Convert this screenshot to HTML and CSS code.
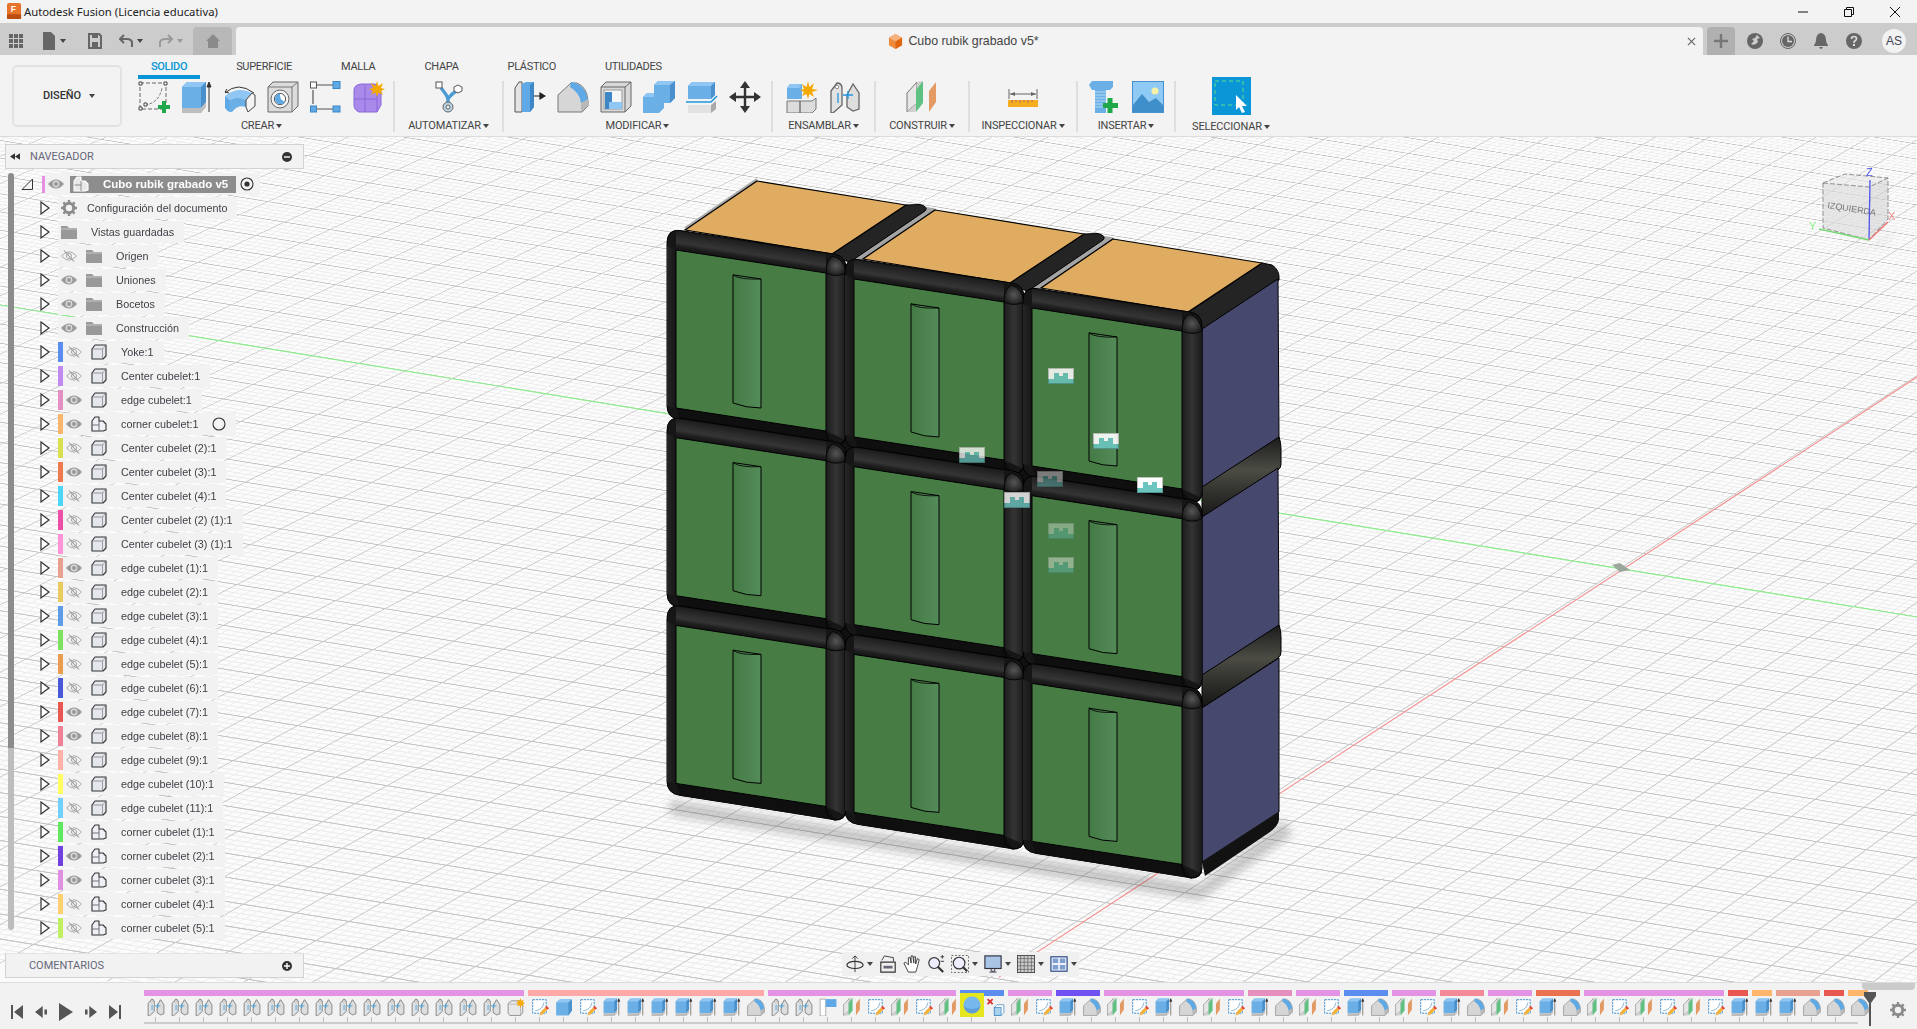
FILE: index.html
```html
<!DOCTYPE html>
<html lang="es">
<head>
<meta charset="utf-8">
<title>Autodesk Fusion</title>
<link rel="stylesheet" href="styles.css">
</head>
<body>
<svg class="defs" aria-hidden="true">
<defs>
<symbol id="eye-on" viewBox="0 0 16 12"><path d="M0 6Q8-3 16 6Q8 15 0 6Z" fill="#999"/><circle cx="8" cy="6" r="3.4" fill="#d8d8d8"/><circle cx="8" cy="6" r="2" fill="#999"/></symbol>
<symbol id="eye-off" viewBox="0 0 16 12"><path d="M.6 6Q8-2.5 15.4 6Q8 14.5.6 6Z" fill="none" stroke="#aaa"/><circle cx="8" cy="6" r="2.6" fill="none" stroke="#aaa"/><path d="M3 .5L13 11.5" stroke="#999" stroke-width="1.1"/></symbol>
<symbol id="folder" viewBox="0 0 16 14"><path d="M0 1H6L8 3H16V14H0Z" fill="#999"/><path d="M0 4H16" stroke="#ddd" stroke-width=".7"/></symbol>
<symbol id="gear" viewBox="0 0 16 16"><circle cx="8" cy="8" r="4.7" fill="none" stroke="#8c8c8c" stroke-width="3"/><path d="M8 0V16M0 8H16M2.3 2.3L13.7 13.7M13.7 2.3L2.3 13.7" stroke="#8c8c8c" stroke-width="2.4" stroke-dasharray="3 10 3"/></symbol>
<symbol id="cube" viewBox="0 0 16 16"><path d="M1 5L4 1H15V12L12 15H1Z" fill="#e4e7ee" stroke="#333" stroke-width="1.1" stroke-linejoin="round"/><path d="M1.5 5H11.5V14.5M11.5 5L15 1.2" fill="none" stroke="#777" stroke-width=".7"/></symbol>
<symbol id="comp" viewBox="0 0 16 16"><path d="M1 5L4 1H8V5H12L15 8V14L12 15H1Z" fill="#eef0f5" stroke="#333" stroke-width="1.1" stroke-linejoin="round"/><path d="M1.5 9H8V15M8 5V9" fill="none" stroke="#555" stroke-width=".8"/></symbol>
<symbol id="comp-w" viewBox="0 0 16 16"><path d="M1 5L4 1H8V5H12L15 8V14L12 15H1Z" fill="#e8e8e8" stroke="#fff" stroke-width="1.1" stroke-linejoin="round"/><path d="M1.5 9H8V15M8 5V9" fill="none" stroke="#777" stroke-width=".8"/></symbol>
<symbol id="arrow" viewBox="0 0 10 14"><path d="M1 1L9 7L1 13Z" fill="#fff" stroke="#333" stroke-width="1.2"/></symbol>
<symbol id="radio" viewBox="0 0 14 14"><circle cx="7" cy="7" r="6" fill="#f4f4f4" stroke="#333" stroke-width="1.1"/></symbol>
<symbol id="radio-on" viewBox="0 0 14 14"><circle cx="7" cy="7" r="6" fill="#f4f4f4" stroke="#333" stroke-width="1.1"/><circle cx="7" cy="7" r="2.6" fill="#333"/></symbol>

<symbol id="s-sketch" viewBox="0 0 32 32"><rect x="2" y="2" width="26" height="26" fill="none" stroke="#666" stroke-dasharray="4 2"/><path d="M7 24Q21 22 24 7" fill="none" stroke="#777" stroke-dasharray="3 1.5"/><path d="M1 1h3v3H1zM26 1h3v3h-3zM1 26h3v3H1zM6 22h3v3H6z" fill="#fff" stroke="#444"/><path d="M26 20V32M20 26H32" stroke="#1fa84a" stroke-width="4"/></symbol>
<symbol id="s-ext" viewBox="0 0 32 32"><path d="M1 6L6 1H25V21L20 27H1Z" fill="#6ab0e6"/><path d="M1 6L6 1H25L20 6Z" fill="#8fc6f3"/><path d="M20 6L25 1V21L20 27Z" fill="#4a90cc"/><path d="M1 27H20L25 21V26L20 32H1Z" fill="#bdbdbd"/><path d="M28 31V2M26 6L28 1L30 6Z" stroke="#333" fill="#333"/></symbol>
<symbol id="s-rev" viewBox="0 0 32 32"><path d="M1 12Q14 0 30 12" fill="none" stroke="#333"/><path d="M1 11L3 8M1 11L5 12" stroke="#333"/><path d="M1 15Q14 5 28 12L22 19Q14 14 6 19Z" fill="#8fc6f3"/><path d="M1 15L6 19V31Q3 30 1 27Z" fill="#5ea9e6"/><path d="M6 19Q14 14 22 19V26Q14 23 8 31H6Z" fill="#6ab0e6"/><path d="M22 19L28 12L31 14V25L24 31L22 26Z" fill="#f4f4f4" stroke="#444"/></symbol>
<symbol id="s-hole" viewBox="0 0 32 32"><path d="M1 6L6 1H31V25L25 31H1Z" fill="#dcdcdc" stroke="#666"/><path d="M1 6H25V31M25 6L31 1" fill="none" stroke="#777"/><circle cx="13" cy="18" r="9" fill="#f2f2f2" stroke="#666"/><circle cx="13" cy="18" r="5.6" fill="#fff" stroke="#555"/><path d="M8 18A5.6 5.6 0 0 1 13 12.5A8 8 0 0 0 18 21A5.600 5.600 0 0 1 8 18Z" fill="#5ea9e6"/></symbol>
<symbol id="s-rigid" viewBox="0 0 32 32"><path d="M7 4H23M3 9V23M7 28H23" stroke="#555" stroke-width="1.2"/><rect x="0.500" y="1" width="6" height="6" fill="#fff" stroke="#555"/><rect x="23" y="0.500" width="7" height="7" fill="#5ea9e6" stroke="#3f87c4"/><rect x="0.500" y="25" width="6" height="6" fill="#5ea9e6" stroke="#3f87c4"/><rect x="23" y="25" width="7" height="6" fill="#5ea9e6" stroke="#3f87c4"/></symbol>
<symbol id="s-form" viewBox="0 0 32 32"><path d="M1 9Q1 4 8 3H22L28 10V24L24 31H6Q1 29 1 24Z" fill="#a98aea" stroke="#8a66d8"/><path d="M1 18H24M12 4V31M24 8V31" stroke="#8a66d8" fill="none"/><path d="M24 0L25.500 5L30 2L28 7L32 8L28 10L30 14L25.500 11.500L24 16L22.500 11.500L18 14L20 10L16 8L20 7L18 2L22.500 5Z" fill="#f5a800"/></symbol>
<symbol id="s-auto" viewBox="0 0 32 32"><path d="M8 7Q14 14 15 18M25 9Q18 13 15 18V24" fill="none" stroke="#4d9bd4" stroke-width="3.4"/><rect x="3" y="1" width="6" height="6" fill="#fff" stroke="#555"/><path d="M25 4L29 6V10L25 12L21 10V6Z" fill="#fff" stroke="#555"/><circle cx="15" cy="26" r="5" fill="#b9d2e6" stroke="#666"/><circle cx="15" cy="26" r="2" fill="#eee" stroke="#666"/></symbol>
<symbol id="s-press" viewBox="0 0 32 32"><path d="M1 7L5 1H8V31H1Z" fill="#e4e4e4" stroke="#555"/><path d="M8 3L12 1H20V26L16 31H8Z" fill="#5ea9e6"/><path d="M16 4L20 1V26L16 31Z" fill="#3f87c4"/><path d="M20 15H29M26 12L31 15L26 18Z" stroke="#222" fill="#222" stroke-width="1.200"/></symbol>
<symbol id="s-fillet" viewBox="0 0 32 32"><path d="M1 14L14 2H20Q30 6 31 20V25L25 31H1Z" fill="#d6d6d6" stroke="#777"/><path d="M14 3Q20 4 26 14L22 12Q20 8 14 5Z" fill="#5ea9e6"/><path d="M14 1Q28 3 31 19L24 22Q23 12 13 6Z" fill="#5ea9e6"/><path d="M24 31V22L31 18V25Z" fill="#b8b8b8"/></symbol>
<symbol id="s-shell" viewBox="0 0 32 32"><path d="M1 6L6 1H31V25L25 31H1Z" fill="#d8d8d8" stroke="#666"/><path d="M1 6H25V31M25 6L31 1" fill="none" stroke="#666"/><rect x="4" y="9" width="18" height="19" fill="#f6f6f6" stroke="#999"/><path d="M5 11H12V21H22V28H5Z" fill="#8fc6f3"/><path d="M5 11H12V21H9V28H5Z" fill="#3f87c4"/></symbol>
<symbol id="s-comb" viewBox="0 0 32 32"><path d="M11 12V4L15 0H32V17L27 22H21V27L16 32H0V16L4 12Z" fill="#6ab0e6"/><path d="M11 4L15 0H32L27 4Z" fill="#8fc6f3"/><path d="M27 4L32 0V17L27 22Z" fill="#4a90cc"/><path d="M0 16L4 12H11V16Z" fill="#8fc6f3"/></symbol>
<symbol id="s-off" viewBox="0 0 32 32"><path d="M2 5L6 1H29V14L25 18H2Z" fill="#6ab0e6"/><path d="M2 5L6 1H29L25 5Z" fill="#8fc6f3"/><path d="M25 5L29 1V14L25 18Z" fill="#4a90cc"/><path d="M0 21H25L31 15" stroke="#2196e0" stroke-width="1.600" fill="none"/><path d="M2 24H25L30 20V28L25 32H2Z" fill="#e2e2e2"/><path d="M25 24L30 20V28L25 32Z" fill="#aaa"/></symbol>
<symbol id="s-move" viewBox="0 0 32 32"><path d="M16 2V30M2 16H30" stroke="#333" stroke-width="2.400"/><path d="M16 0L21 7H11ZM16 32L21 25H11ZM0 16L7 11V21ZM32 16L25 11V21Z" fill="#333"/></symbol>
<symbol id="s-new" viewBox="0 0 32 32"><path d="M1 20H14V32H1ZM14 20H26L30 17V28L26 32H14Z" fill="#dcdcdc" stroke="#777"/><path d="M1 7L4 3H16V18H1Z" fill="#6ab0e6"/><path d="M1 7L4 3H16L13 7Z" fill="#8fc6f3"/><path d="M22 0L23.500 6L28 2L26 8L32 9L26 11L28 16L23.500 13L22 18L20.500 13L16 15L18 11L14 9L18 8L16 3L20.500 6Z" fill="#f5a800"/></symbol>
<symbol id="s-joint" viewBox="0 0 32 32"><path d="M2 10L8 2Q12 2 13 6V24L4 32H2Z" fill="#e2e2e2" stroke="#666" stroke-width="1.300"/><path d="M19 12L24 3L30 12V28L24 30L18 26V14Z" fill="#dedede" stroke="#666" stroke-width="1.300"/><path d="M9 12V22M19 10V18M14 14H24" stroke="#2196e0" stroke-width="1.300"/><circle cx="8" cy="6" r="1.800" fill="#fff" stroke="#666" stroke-width=".7"/></symbol>
<symbol id="s-plane" viewBox="0 0 32 32"><path d="M1 12L11 1V22L1 31Z" fill="#e6e6e6" stroke="#777"/><path d="M11 1L16 0V22L9 31H1L11 22Z" fill="#cfcfcf"/><path d="M10 31L17 22V0L10 9Z" fill="#5ec182"/><path d="M23 10L30 1V21L23 31Z" fill="#e39a63"/></symbol>
<symbol id="s-meas" viewBox="0 0 32 32"><path d="M2 8V18M30 8V18" stroke="#666"/><path d="M3 13H29" stroke="#666"/><path d="M3 13L8 11V15ZM29 13L24 11V15Z" fill="#666"/><rect x="1" y="19" width="30" height="7" fill="#f5ad1d"/><path d="M5 19v3M9 19v2M13 19v3M17 19v2M21 19v3M25 19v2" stroke="#a66"/></symbol>
<symbol id="s-bolt" viewBox="0 0 32 32"><path d="M0 4L3 0H24V6L21 9H17V32H6V9H3Z" fill="#6ab0e6"/><path d="M6 11H17M6 14H17M6 17H17M6 20H17M6 23H17M6 26H17" stroke="#b6d9f3"/><path d="M21 17V32M14 24.500H29" stroke="#1fa84a" stroke-width="5"/></symbol>
<symbol id="s-img" viewBox="0 0 32 32"><rect x="0.500" y="0.500" width="31" height="31" fill="#8fcaf5" stroke="#4a90cc"/><circle cx="23" cy="10" r="3.500" fill="#f6f0a8"/><path d="M1 24L10 13L17 21L24 17L31 24V31H1Z" fill="#3f8fca"/></symbol>
<symbol id="s-sel" viewBox="0 0 39 38"><rect width="39" height="38" fill="#0b96d8"/><rect x="3" y="4" width="28" height="24" fill="none" stroke="#5fe08a" stroke-dasharray="4 3"/><path d="M24 18V33L27 30L30 36L33 35L30 29H35Z" fill="#fff"/></symbol>

<symbol id="t-sketch" viewBox="0 0 32 32"><rect x="3" y="3" width="24" height="24" fill="#fff" stroke="#3f8fd0" stroke-width="1.700" stroke-dasharray="4 1.500"/><path d="M7 23Q21 21 23 8" fill="none" stroke="#6a9cc6" stroke-width="1.300"/><path d="M15 31L17 25L25 17L29 21L21 29Z" fill="#f2b03c"/><path d="M25 17L28 14L32 18L29 21Z" fill="#ea4033"/></symbol>
<symbol id="t-box" viewBox="0 0 32 32"><path d="M2 8L9 2H30V22L24 31H2Z" fill="#6ab0e6"/><path d="M2 8L9 2H30L24 8Z" fill="#8fc6f3"/><path d="M24 8L30 2V22L24 31Z" fill="#4a90cc"/></symbol>
<symbol id="t-flag" viewBox="0 0 32 32"><path d="M2 2H12V32H2Z" fill="#fff" stroke="#777"/><rect x="12" y="2" width="19" height="14" fill="#5ea9e6"/></symbol>
<symbol id="t-sphere" viewBox="0 0 32 32"><circle cx="16" cy="16" r="15" fill="#76b7ee"/><path d="M1 16A15 7 0 0 0 31 16A15 15 0 0 1 1 16Z" fill="#5f9fd6"/></symbol>
<symbol id="t-rem" viewBox="0 0 32 32"><path d="M1 2L10 11M10 2L1 11" stroke="#d62d2d" stroke-width="3"/><path d="M13 17L18 12H30V26L25 31H13Z" fill="#fff" stroke="#3f87c4" stroke-width="1.300"/><rect x="13" y="17" width="12" height="14" fill="#a9d2f0" stroke="#3f87c4" stroke-width="1.300"/></symbol>
<symbol id="t-new" viewBox="0 0 32 32"><path d="M2 10L8 5H24L28 9V26L24 31H5L2 27Z" fill="#e8e8e8" stroke="#777" stroke-width="1.300"/><path d="M2 11H24V31" fill="none" stroke="#999"/><path d="M24 0L25.500 5L30 3L28 7L32 9L28 11L30 15L25.500 13L24 18L22.500 13L18 15L20 11L16 9L20 7L18 3L22.500 5Z" fill="#f5a800"/></symbol>

<linearGradient id="g-top" gradientUnits="userSpaceOnUse" x1="73" y1="-8" x2="70" y2="11"><stop offset="0" stop-color="#1c1c1c"/><stop offset=".35" stop-color="#2c2c2c"/><stop offset=".6" stop-color="#353535"/><stop offset=".8" stop-color="#1e1e1e"/><stop offset="1" stop-color="#141414"/></linearGradient>
<linearGradient id="g-right" gradientUnits="userSpaceOnUse" x1="150" y1="0" x2="170" y2="0"><stop offset="0" stop-color="#1c1c1c"/><stop offset=".5" stop-color="#343434"/><stop offset="1" stop-color="#1a1a1a"/></linearGradient>
<linearGradient id="g-left" gradientUnits="userSpaceOnUse" x1="-9" y1="0" x2="0" y2="0"><stop offset="0" stop-color="#262626"/><stop offset="1" stop-color="#161616"/></linearGradient>
<linearGradient id="g-slot"><stop offset="0" stop-color="#447a44"/><stop offset="1" stop-color="#548b5a"/></linearGradient>
<radialGradient id="g-ball"><stop offset="0" stop-color="#565656"/><stop offset="1" stop-color="#1f1f1f"/></radialGradient>
<linearGradient id="g-band" x1="0" y1="0" x2="0" y2="1"><stop offset="0" stop-color="#1b1b1b"/><stop offset=".4" stop-color="#4c4c45"/><stop offset=".7" stop-color="#2e2e2a"/><stop offset="1" stop-color="#141414"/></linearGradient>
<filter id="blur" x="-10%" y="-50%" width="120%" height="200%"><feGaussianBlur stdDeviation="4"/></filter>

<g id="cell">
<path d="M-9-7Q-9-21 4-19.500L158 4Q170 6 170 18V184Q170 196 158 194L4 170Q-9 168-9 156Z" fill="#161616" stroke="#000"/>
<path d="M0-19L150 4L150 23L0 0Z" fill="url(#g-top)"/>
<path d="M150 23H170V190L150 181Z" fill="url(#g-right)"/>
<path d="M-9-4L0 0V158L-9 156Z" fill="url(#g-left)"/>
<path d="M0 158L150 181L160 195L4 170Z" fill="#0f0f0f"/>
<path d="M150 23Q150 10 157 6Q168 9 170 23Q160 28 150 23Z" fill="url(#g-ball)" stroke="#000" stroke-width=".8"/>
<path d="M150 181Q150 193 159 195Q169 195 170 184" fill="none" stroke="#000" stroke-width=".8"/>
<path d="M0 0L150 23V181L0 158Z" fill="#477d45" stroke="#000"/>
<path d="M57 25Q57 24 58 25L85 29V158Q70 158 57 153Z" fill="url(#g-slot)" stroke="#000"/>
<path d="M57 25Q64 30 85 29" fill="none" stroke="#000" stroke-width=".8"/>
</g>
<g id="badge">
<rect width="26" height="16" fill="#fff"/>
<path d="M0 11H6V5H11V8H15V5H20V11H26V16H0Z" fill="#6cc6c0"/>
<rect x=".5" y=".5" width="25" height="15" fill="none" stroke="#000" stroke-opacity=".25"/>
</g>
</defs>
</svg>

<header class="titlebar">
  <svg class="app-logo" viewBox="0 0 16 18"><rect width="15" height="17" rx="2" fill="#e8742c"/><rect y="12" width="15" height="5" rx="1" fill="#bb4d10"/><text x="4" y="10" class="logo-f">F</text></svg>
  <span class="app-title">Autodesk Fusion (Licencia educativa)</span>
  <div class="winctl">
    <svg class="wbtn" viewBox="0 0 12 12"><path d="M1 6H11" stroke="#111"/></svg>
    <svg class="wbtn" viewBox="0 0 12 12"><path d="M1.500 3.500H8.500V10.500H1.500ZM3.500 3.500V1.500H10.500V8.500H8.500" fill="none" stroke="#111"/></svg>
    <svg class="wbtn" viewBox="0 0 12 12"><path d="M1 1L11 11M11 1L1 11" stroke="#111"/></svg>
  </div>
</header>

<nav class="tabbar">
  <div class="quick">
    <svg class="qi" viewBox="0 0 14 14"><path d="M0 0h4v4H0zM5 0h4v4H5zM10 0h4v4h-4zM0 5h4v4H0zM5 5h4v4H5zM10 5h4v4h-4zM0 10h4v4H0zM5 10h4v4H5zM10 10h4v4h-4z" fill="#666"/></svg>
    <svg class="qi file" viewBox="0 0 14 18"><path d="M1 0H9L13 4V18H1Z" fill="#666"/></svg><span class="caret dark"></span>
    <svg class="qi save" viewBox="0 0 14 16"><path d="M1 1H11L13 3V15H1Z" fill="none" stroke="#666" stroke-width="2"/><path d="M4 1H10V5H4ZM4 9H10V15H4Z" fill="#666"/></svg>
    <svg class="qi undo" viewBox="0 0 14 14"><path d="M13 13V8Q12 5 8 5H2M5 1L1 5L5 9" fill="none" stroke="#666" stroke-width="2"/></svg><span class="caret dark"></span>
    <svg class="qi redo" viewBox="0 0 14 14"><path d="M1 13V8Q2 5 6 5H12M9 1L13 5L9 9" fill="none" stroke="#9a9a9a" stroke-width="2"/></svg><span class="caret"></span>
  </div>
  <div class="home"><svg class="qi" viewBox="0 0 14 14"><path d="M0 7L7 0L14 7H12V14H2V7Z" fill="#8a8a8a"/></svg></div>
  <div class="doc-tab">
    <svg class="doc-cube" viewBox="0 0 16 16"><path d="M8 0L15 4V12L8 16L1 12V4Z" fill="#f08a3c"/><path d="M8 0L15 4L8 8L1 4Z" fill="#f7b27c"/><path d="M8 8L15 4V12L8 16Z" fill="#e0660f"/></svg>
    <span class="doc-name">Cubo rubik grabado v5*</span>
    <svg class="doc-close" viewBox="0 0 10 10"><path d="M1 1L9 9M9 1L1 9" stroke="#666" stroke-width="1.300"/></svg>
  </div>
  <div class="plus-tab"><svg class="qi" viewBox="0 0 14 14"><path d="M7 0V14M0 7H14" stroke="#777" stroke-width="2.400"/></svg></div>
  <div class="status">
    <svg class="st" viewBox="0 0 16 16"><circle cx="8" cy="8" r="8" fill="#666"/><path d="M10 2L13 5L10 6L11 9Q8 13 4 11L7 8L5 6L8 5Z" fill="#ccc"/></svg>
    <svg class="st" viewBox="0 0 16 16"><circle cx="8" cy="8" r="7.500" fill="none" stroke="#666"/><circle cx="8" cy="8" r="6" fill="#666"/><path d="M8 3.500V8.500H12" fill="none" stroke="#ddd" stroke-width="1.300"/></svg>
    <svg class="st" viewBox="0 0 16 16"><path d="M8 0Q13 1 13 7Q13 10 15 12V13H1V12Q3 10 3 7Q3 1 8 0Z" fill="#666"/><path d="M6 14H10Q9 16 8 16Q7 16 6 14Z" fill="#666"/></svg>
    <svg class="st" viewBox="0 0 16 16"><circle cx="8" cy="8" r="8" fill="#666"/><path d="M5.500 6Q5.500 3.500 8 3.500Q10.500 3.500 10.500 5.800Q10.500 7 8.800 8Q8 8.500 8 10" fill="none" stroke="#ddd" stroke-width="1.700"/><rect x="7" y="11" width="2" height="2" fill="#ddd"/></svg>
    <div class="avatar">AS</div>
  </div>
</nav>

<section class="toolbar">
  <button class="design">DISEÑO<span class="caret dark"></span></button>
  <div class="ribbon">
    <div class="tabs">
      <span class="tab active">SOLIDO</span><span class="tab">SUPERFICIE</span><span class="tab">MALLA</span><span class="tab">CHAPA</span><span class="tab">PLÁSTICO</span><span class="tab">UTILIDADES</span>
    </div>
    <div class="groups">
      <div class="group g-create">
        <div class="icons"><svg class="ti"><use href="#s-sketch"/></svg><svg class="ti"><use href="#s-ext"/></svg><svg class="ti"><use href="#s-rev"/></svg><svg class="ti"><use href="#s-hole"/></svg><svg class="ti"><use href="#s-rigid"/></svg><svg class="ti"><use href="#s-form"/></svg></div>
        <span class="glabel">CREAR<span class="caret dark"></span></span>
      </div>
      <div class="group g-auto">
        <div class="icons"><svg class="ti"><use href="#s-auto"/></svg></div>
        <span class="glabel">AUTOMATIZAR<span class="caret dark"></span></span>
      </div>
      <div class="group g-mod">
        <div class="icons"><svg class="ti"><use href="#s-press"/></svg><svg class="ti"><use href="#s-fillet"/></svg><svg class="ti"><use href="#s-shell"/></svg><svg class="ti"><use href="#s-comb"/></svg><svg class="ti"><use href="#s-off"/></svg><svg class="ti"><use href="#s-move"/></svg></div>
        <span class="glabel">MODIFICAR<span class="caret dark"></span></span>
      </div>
      <div class="group g-asm">
        <div class="icons"><svg class="ti"><use href="#s-new"/></svg><svg class="ti"><use href="#s-joint"/></svg></div>
        <span class="glabel">ENSAMBLAR<span class="caret dark"></span></span>
      </div>
      <div class="group g-con">
        <div class="icons"><svg class="ti"><use href="#s-plane"/></svg></div>
        <span class="glabel">CONSTRUIR<span class="caret dark"></span></span>
      </div>
      <div class="group g-ins">
        <div class="icons"><svg class="ti"><use href="#s-meas"/></svg></div>
        <span class="glabel">INSPECCIONAR<span class="caret dark"></span></span>
      </div>
      <div class="group g-ib">
        <div class="icons"><svg class="ti"><use href="#s-bolt"/></svg><svg class="ti"><use href="#s-img"/></svg></div>
        <span class="glabel">INSERTAR<span class="caret dark"></span></span>
      </div>
      <div class="group g-sel">
        <div class="icons"><svg class="sel-i"><use href="#s-sel"/></svg></div>
        <span class="glabel">SELECCIONAR<span class="caret dark"></span></span>
      </div>
    </div>
  </div>
</section>

<main class="viewport">
  <div class="plane"></div>
  <svg class="scene" viewBox="0 137 1917 845">
    <path d="M0 305L1917 617" stroke="#8df08d" stroke-width="1.200" fill="none"/>
    <path d="M1917 377L999 977" stroke="#f59090" stroke-width="1.200" fill="none"/>
    <path d="M1612 565L1620 563L1630 570L1620 572Z" fill="#9aa79a"/>
    <path d="M670 800L1200 885L1285 820L1292 835L1200 900L670 815Z" fill="#555" opacity=".3" filter="url(#blur)"/>
    <path d="M757 179L685 228" stroke="#aaa" stroke-width="2"/>
    <path d="M927 207L937 209L866 260L848 262Z" fill="#a4a4a4"/>
    <path d="M1105 236L1115 238L1044 289L1026 291Z" fill="#a4a4a4"/>
    <path d="M906 205L920 204.500Q929 207 925 211L850 262L828 256Z" fill="#242424" stroke="#000"/>
    <path d="M1084 234L1098 233.500Q1107 236 1103 240L1028 291L1006 285Z" fill="#242424" stroke="#000"/>
    <path d="M1262 263L1272 265Q1280 270 1279 280L1204 332L1186 314Z" fill="#242424" stroke="#000"/>
    <path d="M757 181L906 205L832 254L685 230Z" fill="#dfac62" stroke="#000" stroke-width="1.200"/>
    <path d="M935 210L1084 234L1010 283L863 259Z" fill="#dfac62" stroke="#000" stroke-width="1.200"/>
    <path d="M1113 239L1262 263L1188 312L1041 288Z" fill="#dfac62" stroke="#000" stroke-width="1.200"/>
    <path d="M680 240L1195 320V870L680 785Z" fill="#111"/>
    <path d="M1202 329L1278 279L1279 439L1202 489Z" fill="#47486e" stroke="#000"/>
    <path d="M1202 487L1279 437Q1281 442 1281 449V464Q1281 468 1278 470L1202 520Z" fill="url(#g-band)" stroke="#000"/>
    <path d="M1202 517L1278 468L1279 627L1202 677Z" fill="#47486e" stroke="#000"/>
    <path d="M1202 675L1279 625Q1281 630 1281 637V652Q1281 656 1278 658L1202 708Z" fill="url(#g-band)" stroke="#000"/>
    <path d="M1202 708L1279 658L1279 812L1202 862Z" fill="#47486e" stroke="#000"/>
    <path d="M1202 862L1279 812V820Q1278 826 1270 832L1205 876Z" fill="#121212"/>
    <use href="#cell" x="676" y="250"/><use href="#cell" x="854" y="279"/><use href="#cell" x="1032" y="308"/>
    <use href="#cell" x="676" y="437.700"/><use href="#cell" x="854" y="466.700"/><use href="#cell" x="1032" y="495.700"/>
    <use href="#cell" x="676" y="625.400"/><use href="#cell" x="854" y="654.400"/><use href="#cell" x="1032" y="683.400"/>
    <use href="#badge" x="1048" y="368" opacity=".85"/>
    <use href="#badge" x="1093" y="433" opacity=".9"/>
    <use href="#badge" x="1137" y="477"/>
    <use href="#badge" x="1037" y="471" opacity=".45"/>
    <use href="#badge" x="1004" y="492" opacity=".8"/>
    <use href="#badge" x="959" y="447" opacity=".75"/>
    <use href="#badge" x="1048" y="523" opacity=".35"/>
    <use href="#badge" x="1048" y="557" opacity=".4"/>
  </svg>

  <aside class="nav-panel">
    <div class="panel-head">
      <svg class="rew" viewBox="0 0 12 8"><path d="M6 0V8L0 4ZM12 0V8L6 4Z" fill="#333"/></svg>
      <span class="panel-title">NAVEGADOR</span>
      <svg class="pm" viewBox="0 0 10 10"><circle cx="5" cy="5" r="5" fill="#333"/><path d="M2 5H8" stroke="#fff" stroke-width="1.400"/></svg>
    </div>
    <div class="tree">
      <div class="scrollbar"></div>
      <div class="rows">
        <div class="row root">
          <svg class="tri" viewBox="0 0 12 12"><path d="M1 11.500L11.500 1V11.500Z" fill="#f4f4f4" stroke="#333"/></svg>
          <span class="rbar pink"></span>
          <div class="rbody rootb">
            <svg class="eye"><use href="#eye-on"/></svg>
            <div class="selected"><svg class="ci16"><use href="#comp-w"/></svg><span class="sel-name">Cubo rubik grabado v5</span></div>
            <svg class="radio"><use href="#radio-on"/></svg>
          </div>
        </div>
        <div class="row"><svg class="arr"><use href="#arrow"/></svg><div class="rbody"><svg class="ci16"><use href="#gear"/></svg><span class="txt t-gear">Configuración del documento</span></div></div>
        <div class="row"><svg class="arr"><use href="#arrow"/></svg><div class="rbody"><svg class="ci16 fd"><use href="#folder"/></svg><span class="txt">Vistas guardadas</span></div></div>
        <div class="row"><svg class="arr"><use href="#arrow"/></svg><div class="rbody"><svg class="eye"><use href="#eye-off"/></svg><svg class="ci16 fd"><use href="#folder"/></svg><span class="txt">Origen</span></div></div>
        <div class="row"><svg class="arr"><use href="#arrow"/></svg><div class="rbody"><svg class="eye"><use href="#eye-on"/></svg><svg class="ci16 fd"><use href="#folder"/></svg><span class="txt">Uniones</span></div></div>
        <div class="row"><svg class="arr"><use href="#arrow"/></svg><div class="rbody"><svg class="eye"><use href="#eye-on"/></svg><svg class="ci16 fd"><use href="#folder"/></svg><span class="txt">Bocetos</span></div></div>
        <div class="row"><svg class="arr"><use href="#arrow"/></svg><div class="rbody"><svg class="eye"><use href="#eye-on"/></svg><svg class="ci16 fd"><use href="#folder"/></svg><span class="txt">Construcción</span></div></div>
        <div class="row"><svg class="arr"><use href="#arrow"/></svg><span class="cbar c-yoke"></span><div class="rbody item"><svg class="eye"><use href="#eye-off"/></svg><svg class="ci16"><use href="#cube"/></svg><span class="txt">Yoke:1</span></div></div>
        <div class="row"><svg class="arr"><use href="#arrow"/></svg><span class="cbar c-a"></span><div class="rbody item"><svg class="eye"><use href="#eye-off"/></svg><svg class="ci16"><use href="#cube"/></svg><span class="txt">Center cubelet:1</span></div></div>
        <div class="row"><svg class="arr"><use href="#arrow"/></svg><span class="cbar c-b"></span><div class="rbody item"><svg class="eye"><use href="#eye-on"/></svg><svg class="ci16"><use href="#cube"/></svg><span class="txt">edge cubelet:1</span></div></div>
        <div class="row"><svg class="arr"><use href="#arrow"/></svg><span class="cbar c-c"></span><div class="rbody item"><svg class="eye"><use href="#eye-on"/></svg><svg class="ci16"><use href="#comp"/></svg><span class="txt">corner cubelet:1</span><svg class="radio r2"><use href="#radio"/></svg></div></div>
        <div class="row"><svg class="arr"><use href="#arrow"/></svg><span class="cbar c-d"></span><div class="rbody item"><svg class="eye"><use href="#eye-off"/></svg><svg class="ci16"><use href="#cube"/></svg><span class="txt">Center cubelet (2):1</span></div></div>
        <div class="row"><svg class="arr"><use href="#arrow"/></svg><span class="cbar c-e"></span><div class="rbody item"><svg class="eye"><use href="#eye-on"/></svg><svg class="ci16"><use href="#cube"/></svg><span class="txt">Center cubelet (3):1</span></div></div>
        <div class="row"><svg class="arr"><use href="#arrow"/></svg><span class="cbar c-f"></span><div class="rbody item"><svg class="eye"><use href="#eye-off"/></svg><svg class="ci16"><use href="#cube"/></svg><span class="txt">Center cubelet (4):1</span></div></div>
        <div class="row"><svg class="arr"><use href="#arrow"/></svg><span class="cbar c-g"></span><div class="rbody item"><svg class="eye"><use href="#eye-off"/></svg><svg class="ci16"><use href="#cube"/></svg><span class="txt">Center cubelet (2) (1):1</span></div></div>
        <div class="row"><svg class="arr"><use href="#arrow"/></svg><span class="cbar c-h"></span><div class="rbody item"><svg class="eye"><use href="#eye-off"/></svg><svg class="ci16"><use href="#cube"/></svg><span class="txt">Center cubelet (3) (1):1</span></div></div>
        <div class="row"><svg class="arr"><use href="#arrow"/></svg><span class="cbar c-i"></span><div class="rbody item"><svg class="eye"><use href="#eye-on"/></svg><svg class="ci16"><use href="#cube"/></svg><span class="txt">edge cubelet (1):1</span></div></div>
        <div class="row"><svg class="arr"><use href="#arrow"/></svg><span class="cbar c-j"></span><div class="rbody item"><svg class="eye"><use href="#eye-off"/></svg><svg class="ci16"><use href="#cube"/></svg><span class="txt">edge cubelet (2):1</span></div></div>
        <div class="row"><svg class="arr"><use href="#arrow"/></svg><span class="cbar c-k"></span><div class="rbody item"><svg class="eye"><use href="#eye-off"/></svg><svg class="ci16"><use href="#cube"/></svg><span class="txt">edge cubelet (3):1</span></div></div>
        <div class="row"><svg class="arr"><use href="#arrow"/></svg><span class="cbar c-l"></span><div class="rbody item"><svg class="eye"><use href="#eye-off"/></svg><svg class="ci16"><use href="#cube"/></svg><span class="txt">edge cubelet (4):1</span></div></div>
        <div class="row"><svg class="arr"><use href="#arrow"/></svg><span class="cbar c-m"></span><div class="rbody item"><svg class="eye"><use href="#eye-off"/></svg><svg class="ci16"><use href="#cube"/></svg><span class="txt">edge cubelet (5):1</span></div></div>
        <div class="row"><svg class="arr"><use href="#arrow"/></svg><span class="cbar c-n"></span><div class="rbody item"><svg class="eye"><use href="#eye-off"/></svg><svg class="ci16"><use href="#cube"/></svg><span class="txt">edge cubelet (6):1</span></div></div>
        <div class="row"><svg class="arr"><use href="#arrow"/></svg><span class="cbar c-o"></span><div class="rbody item"><svg class="eye"><use href="#eye-on"/></svg><svg class="ci16"><use href="#cube"/></svg><span class="txt">edge cubelet (7):1</span></div></div>
        <div class="row"><svg class="arr"><use href="#arrow"/></svg><span class="cbar c-p"></span><div class="rbody item"><svg class="eye"><use href="#eye-on"/></svg><svg class="ci16"><use href="#cube"/></svg><span class="txt">edge cubelet (8):1</span></div></div>
        <div class="row"><svg class="arr"><use href="#arrow"/></svg><span class="cbar c-q"></span><div class="rbody item"><svg class="eye"><use href="#eye-off"/></svg><svg class="ci16"><use href="#cube"/></svg><span class="txt">edge cubelet (9):1</span></div></div>
        <div class="row"><svg class="arr"><use href="#arrow"/></svg><span class="cbar c-r"></span><div class="rbody item"><svg class="eye"><use href="#eye-off"/></svg><svg class="ci16"><use href="#cube"/></svg><span class="txt">edge cubelet (10):1</span></div></div>
        <div class="row"><svg class="arr"><use href="#arrow"/></svg><span class="cbar c-s"></span><div class="rbody item"><svg class="eye"><use href="#eye-off"/></svg><svg class="ci16"><use href="#cube"/></svg><span class="txt">edge cubelet (11):1</span></div></div>
        <div class="row"><svg class="arr"><use href="#arrow"/></svg><span class="cbar c-t"></span><div class="rbody item"><svg class="eye"><use href="#eye-off"/></svg><svg class="ci16"><use href="#comp"/></svg><span class="txt">corner cubelet (1):1</span></div></div>
        <div class="row"><svg class="arr"><use href="#arrow"/></svg><span class="cbar c-u"></span><div class="rbody item"><svg class="eye"><use href="#eye-on"/></svg><svg class="ci16"><use href="#comp"/></svg><span class="txt">corner cubelet (2):1</span></div></div>
        <div class="row"><svg class="arr"><use href="#arrow"/></svg><span class="cbar c-v"></span><div class="rbody item"><svg class="eye"><use href="#eye-on"/></svg><svg class="ci16"><use href="#comp"/></svg><span class="txt">corner cubelet (3):1</span></div></div>
        <div class="row"><svg class="arr"><use href="#arrow"/></svg><span class="cbar c-w"></span><div class="rbody item"><svg class="eye"><use href="#eye-off"/></svg><svg class="ci16"><use href="#comp"/></svg><span class="txt">corner cubelet (4):1</span></div></div>
        <div class="row"><svg class="arr"><use href="#arrow"/></svg><span class="cbar c-x"></span><div class="rbody item"><svg class="eye"><use href="#eye-off"/></svg><svg class="ci16"><use href="#comp"/></svg><span class="txt">corner cubelet (5):1</span></div></div>
      </div>
    </div>
  </aside>

  <div class="comments">
    <span class="panel-title">COMENTARIOS</span>
    <svg class="pm" viewBox="0 0 10 10"><circle cx="5" cy="5" r="5" fill="#333"/><path d="M2 5H8M5 2V8" stroke="#fff" stroke-width="1.400"/></svg>
  </div>

  <svg class="viewcube" viewBox="0 0 100 90">
    <path d="M30 80L75 82L92 62L60 85Z" fill="#999" opacity=".2" filter="url(#blur)"/>
    <path d="M16 18L62 22V75L16 63Z" fill="#dcdcdc" fill-opacity=".65"/>
    <path d="M62 22L81 13V54L62 75Z" fill="#cfcfcf" fill-opacity=".55"/>
    <path d="M16 18L38 9L81 13L62 22Z" fill="#e8e8e8" fill-opacity=".6"/>
    <path d="M16 18L38 9L81 13V54L62 75L16 63ZM16 18L62 22L81 13" fill="none" stroke="#777" stroke-width=".8" stroke-dasharray="5 2"/>
    <text class="vc-t" transform="translate(20 43) rotate(9)">IZQUIERDA</text>
    <path d="M62 75L63 15" stroke="#4f55e8" stroke-width="1.300"/>
    <path d="M62 75L12 64" stroke="#76d976" stroke-width="1.300"/>
    <path d="M62 75L81 57" stroke="#f07070" stroke-width="1.300"/>
    <text class="vc-a z" x="59" y="11">Z</text>
    <text class="vc-a y" x="2" y="65">Y</text>
    <text class="vc-a x" x="81" y="55">X</text>
  </svg>

  <div class="navbar">
    <svg class="nb" viewBox="0 0 20 20"><path d="M10 1V19M7 4L10 1L13 4" fill="none" stroke="#333"/><ellipse cx="10" cy="11" rx="9" ry="4" fill="none" stroke="#333" stroke-width="1.300"/></svg><span class="caret dark"></span>
    <svg class="nb sp" viewBox="0 0 20 20"><path d="M2 8H18V19H2Z" fill="#eee" stroke="#333" stroke-width="1.300"/><path d="M5 12H15V15H5Z" fill="#667"/><path d="M3 6L6 1L16 3V7" fill="none" stroke="#333"/></svg>
    <svg class="nb" viewBox="0 0 20 20"><path d="M6 19Q3 13 1 9L3 8L6 11V3L8 3L9 9V1H11L12 9V2H14L14 10L16 4L18 5L16 13Q15 17 14 19Z" fill="#fff" stroke="#333"/></svg>
    <svg class="nb" viewBox="0 0 20 20"><circle cx="8" cy="9" r="6" fill="#eef" stroke="#333" stroke-width="1.300"/><path d="M12 13L18 19" stroke="#333" stroke-width="2.400"/><path d="M15 2H19M17 0V4M15 7H19" stroke="#333"/></svg>
    <svg class="nb" viewBox="0 0 20 20"><rect x=".5" y=".5" width="19" height="19" fill="none" stroke="#555" stroke-dasharray="2 2"/><circle cx="9" cy="9" r="6.500" fill="#eef" stroke="#333" stroke-width="1.300"/><path d="M13 13L18 18" stroke="#333" stroke-width="2.400"/></svg><span class="caret dark"></span>
    <svg class="nb" viewBox="0 0 20 20"><rect x="1" y="1" width="18" height="14" fill="#a9c4e4" stroke="#334" stroke-width="1.300"/><path d="M8 15V18H12V15M6 19H14" stroke="#334" fill="none"/></svg><span class="caret dark"></span>
    <svg class="nb" viewBox="0 0 20 20"><rect x=".5" y=".5" width="19" height="19" fill="#ccc" stroke="#444"/><path d="M4 0V20M8 0V20M12 0V20M16 0V20M0 4H20M0 8H20M0 12H20M0 16H20" stroke="#555" stroke-width=".7"/></svg><span class="caret dark"></span>
    <svg class="nb" viewBox="0 0 20 20"><rect x="1" y="2" width="18" height="16" fill="#eef" stroke="#234a80" stroke-width="1.300"/><path d="M3 4H9V9H3ZM11 4H17V9H11ZM3 11H9V16H3ZM11 11H17V16H11Z" fill="#7fa0cc"/></svg><span class="caret dark"></span>
  </div>
</main>

<footer class="timeline">
  <div class="controls">
    <svg class="pc" viewBox="0 0 12 14"><path d="M0 0H2V14H0ZM12 0V14L3 7Z" fill="#555"/></svg>
    <svg class="pc" viewBox="0 0 14 14"><path d="M9 0V14L0 7ZM11 4H14V10H11Z" fill="#555"/></svg>
    <svg class="pc big" viewBox="0 0 14 18"><path d="M0 0L14 9L0 18Z" fill="#555"/></svg>
    <svg class="pc" viewBox="0 0 14 14"><path d="M5 0V14L14 7ZM0 4H3V10H0Z" fill="#555"/></svg>
    <svg class="pc" viewBox="0 0 12 14"><path d="M0 0V14L9 7ZM10 0H12V14H10Z" fill="#555"/></svg>
  </div>
  <div class="track">
    <div class="segs">
      <div class="seg"><div class="sbar s-pink"></div><div class="cells"><svg class="tl"><use href="#s-joint"/></svg><svg class="tl"><use href="#s-joint"/></svg><svg class="tl"><use href="#s-joint"/></svg><svg class="tl"><use href="#s-joint"/></svg><svg class="tl"><use href="#s-joint"/></svg><svg class="tl"><use href="#s-joint"/></svg><svg class="tl"><use href="#s-joint"/></svg><svg class="tl"><use href="#s-joint"/></svg><svg class="tl"><use href="#s-joint"/></svg><svg class="tl"><use href="#s-joint"/></svg><svg class="tl"><use href="#s-joint"/></svg><svg class="tl"><use href="#s-joint"/></svg><svg class="tl"><use href="#s-joint"/></svg><svg class="tl"><use href="#s-joint"/></svg><svg class="tl"><use href="#s-joint"/></svg><svg class="tl"><use href="#t-new"/></svg></div></div>
      <div class="seg"><div class="sbar s-salmon"></div><div class="cells"><svg class="tl"><use href="#t-sketch"/></svg><svg class="tl"><use href="#t-box"/></svg><svg class="tl"><use href="#t-sketch"/></svg><svg class="tl"><use href="#s-ext"/></svg><svg class="tl"><use href="#s-ext"/></svg><svg class="tl"><use href="#s-ext"/></svg><svg class="tl"><use href="#s-ext"/></svg><svg class="tl"><use href="#s-ext"/></svg><svg class="tl"><use href="#s-ext"/></svg><svg class="tl"><use href="#s-fillet"/></svg></div></div>
      <div class="seg"><div class="sbar s-pink"></div><div class="cells"><svg class="tl"><use href="#s-joint"/></svg><svg class="tl"><use href="#s-joint"/></svg><svg class="tl"><use href="#t-flag"/></svg><svg class="tl"><use href="#s-plane"/></svg><svg class="tl"><use href="#t-sketch"/></svg><svg class="tl"><use href="#s-plane"/></svg><svg class="tl"><use href="#t-sketch"/></svg><svg class="tl"><use href="#s-plane"/></svg></div></div>
      <div class="seg"><div class="sbar s-blue"></div><div class="cells"><svg class="tl hl"><use href="#t-sphere"/></svg><svg class="tl"><use href="#t-rem"/></svg></div></div>
      <div class="seg"><div class="sbar s-pink"></div><div class="cells"><svg class="tl"><use href="#s-plane"/></svg><svg class="tl"><use href="#t-sketch"/></svg></div></div>
      <div class="seg"><div class="sbar s-violet"></div><div class="cells"><svg class="tl"><use href="#s-ext"/></svg><svg class="tl"><use href="#s-fillet"/></svg></div></div>
      <div class="seg"><div class="sbar s-pink"></div><div class="cells"><svg class="tl"><use href="#s-plane"/></svg><svg class="tl"><use href="#t-sketch"/></svg><svg class="tl"><use href="#s-ext"/></svg><svg class="tl"><use href="#s-fillet"/></svg><svg class="tl"><use href="#s-plane"/></svg><svg class="tl"><use href="#t-sketch"/></svg></div></div>
      <div class="seg"><div class="sbar s-rosa"></div><div class="cells"><svg class="tl"><use href="#s-ext"/></svg><svg class="tl"><use href="#s-fillet"/></svg></div></div>
      <div class="seg"><div class="sbar s-pink"></div><div class="cells"><svg class="tl"><use href="#s-plane"/></svg><svg class="tl"><use href="#t-sketch"/></svg></div></div>
      <div class="seg"><div class="sbar s-blue"></div><div class="cells"><svg class="tl"><use href="#s-ext"/></svg><svg class="tl"><use href="#s-fillet"/></svg></div></div>
      <div class="seg"><div class="sbar s-pink"></div><div class="cells"><svg class="tl"><use href="#s-plane"/></svg><svg class="tl"><use href="#t-sketch"/></svg></div></div>
      <div class="seg"><div class="sbar s-rose"></div><div class="cells"><svg class="tl"><use href="#s-ext"/></svg><svg class="tl"><use href="#s-fillet"/></svg></div></div>
      <div class="seg"><div class="sbar s-pink"></div><div class="cells"><svg class="tl"><use href="#s-plane"/></svg><svg class="tl"><use href="#t-sketch"/></svg></div></div>
      <div class="seg"><div class="sbar s-coral"></div><div class="cells"><svg class="tl"><use href="#s-ext"/></svg><svg class="tl"><use href="#s-fillet"/></svg></div></div>
      <div class="seg"><div class="sbar s-pink"></div><div class="cells"><svg class="tl"><use href="#s-plane"/></svg><svg class="tl"><use href="#t-sketch"/></svg><svg class="tl"><use href="#s-plane"/></svg><svg class="tl"><use href="#t-sketch"/></svg><svg class="tl"><use href="#s-plane"/></svg><svg class="tl"><use href="#t-sketch"/></svg></div></div>
      <div class="seg"><div class="sbar s-red"></div><div class="cells"><svg class="tl"><use href="#s-ext"/></svg></div></div>
      <div class="seg"><div class="sbar s-orange"></div><div class="cells"><svg class="tl"><use href="#s-ext"/></svg></div></div>
      <div class="seg"><div class="sbar s-peach"></div><div class="cells"><svg class="tl"><use href="#s-ext"/></svg><svg class="tl"><use href="#s-fillet"/></svg></div></div>
      <div class="seg"><div class="sbar s-red"></div><div class="cells"><svg class="tl"><use href="#s-fillet"/></svg></div></div>
      <div class="seg"><div class="sbar s-orange"></div><div class="cells"><svg class="tl"><use href="#s-fillet"/></svg></div></div>
    </div>
    <div class="ruler"></div>
    <svg class="marker" viewBox="0 0 12 34"><path d="M0 0H12V4L7 11V34H5V11L0 4Z" fill="#555"/></svg>
  </div>
  <div class="scroll-thumb"></div>
  <svg class="tl-gear"><use href="#gear"/></svg>
</footer>
</body>
</html>
```

FILE: styles.css
```css
* { box-sizing: border-box; }
html, body { margin: 0; height: 100%; }
body {
  width: 1917px; height: 1029px; overflow: hidden;
  display: flex; flex-direction: column;
  background: #f3f3f3; color: #444;
  font-family: "Liberation Sans", Arial, sans-serif;
}
.defs { position: absolute; width: 0; height: 0; }

/* title bar */
.titlebar { height: 23px; flex: none; display: flex; align-items: center; padding-left: 7px; background: #f3f3f3; }
.app-logo { width: 15px; height: 17px; }
.logo-f { font: bold 9px "Liberation Sans", sans-serif; fill: #fff; }
.app-title { margin-left: 2px; font: 11.300px "Noto Sans", sans-serif; color: #222; }
.winctl { margin-left: auto; display: flex; gap: 34px; padding-right: 16px; }
.wbtn { width: 12px; height: 12px; }

/* tabs */
.tabbar { height: 32px; flex: none; display: flex; background: #ccc; padding-top: 4px; }
.quick { width: 193px; display: flex; align-items: center; padding-left: 9px; }
.qi { width: 14px; height: 14px; flex: none; }
.qi.file { width: 14px; height: 18px; margin-left: 19px; }
.qi.save { height: 16px; margin-left: 22px; }
.qi.undo { margin-left: 17px; }
.qi.redo { margin-left: 16px; }
.caret { display: inline-block; width: 0; height: 0; margin-left: 4px; border-left: 3px solid transparent; border-right: 3px solid transparent; border-top: 4px solid #999; vertical-align: middle; }
.caret.dark { border-top-color: #444; }
.home { width: 39px; background: #b8b8b8; border-radius: 4px 4px 0 0; display: flex; align-items: center; justify-content: center; }
.doc-tab { position: relative; width: 1467px; margin-left: 4px; background: #f3f3f3; border-radius: 4px 4px 0 0; display: flex; align-items: center; justify-content: center; padding-right: 12px; }
.doc-cube { width: 15px; height: 17px; }
.doc-name { margin-left: 5px; font: 12.400px "Liberation Sans", sans-serif; color: #444; }
.doc-close { position: absolute; right: 7px; top: 10px; width: 9px; height: 9px; }
.plus-tab { width: 28px; margin-left: 4px; background: #b0b0b0; border-radius: 4px 4px 0 0; display: flex; align-items: center; justify-content: center; }
.status { display: flex; align-items: center; flex: 1; padding-left: 12px; }
.st { width: 16px; height: 16px; margin-right: 17px; flex: none; }
.avatar { width: 24px; height: 24px; margin-left: 3px; border-radius: 50%; background: #f2f2f2; font: 12px "Liberation Sans", sans-serif; color: #445; display: flex; align-items: center; justify-content: center; }

/* ribbon */
.toolbar { height: 82px; flex: none; display: flex; border-bottom: 1px solid #dcdcdc; padding-left: 12px; background: #f3f3f3; }
.design { width: 110px; height: 62px; margin-top: 10px; background: #f3f3f3; border: 2px solid #e2e2e2; border-radius: 5px; font: 500 11px Roboto, sans-serif; color: #333; padding: 0 0 2px 4px; letter-spacing: -.1px; }
.design .caret { margin-left: 8px; }
.ribbon { margin-left: 8px; display: flex; flex-direction: column; }
.tabs { display: flex; height: 24px; padding-left: 8px; }
.tab { padding: 5px 13px 0; margin-right: 23px; font: 11px Roboto, sans-serif; letter-spacing: -.32px; color: #444; height: 24px; }
.tab.active { color: #0696d7; border-bottom: 4px solid #0696d7; font-weight: 500; }
.groups { display: flex; margin-top: 2px; }
.group { height: 51px; border-right: 2px solid #dedede; display: flex; flex-direction: column; align-items: center; }
.g-create { width: 265px; }
.g-auto { width: 109px; }
.g-mod { width: 269px; }
.g-asm { width: 103px; }
.g-con { width: 94px; }
.g-ins { width: 108px; }
.g-ib { width: 98px; }
.g-sel { width: 110px; border-right: none; }
.icons { display: flex; gap: 11px; height: 33px; align-items: center; }
.ti { width: 32px; height: 32px; flex: none; }
.sel-i { width: 39px; height: 38px; margin-top: -3px; }
.glabel { margin-top: 6px; font: 11px Roboto, sans-serif; letter-spacing: -.18px; color: #444; white-space: nowrap; }
.glabel .caret { margin-left: 2px; }

/* viewport */
.viewport { position: relative; flex: 1; overflow: hidden; background: #fafafa; }
.plane {
  position: absolute; left: 0; top: 0; width: 3600px; height: 2800px;
  transform-origin: 0 0;
  transform: matrix3d(1.1675,.19,0,0, -.76725,.33151,0,-.0001125, 0,0,1,0, 45.6,-555.42,0,1.18);
  background-color: #fcfcfc;
  background-image:
    linear-gradient(#c6c6c6 2.400px, transparent 2.400px),
    linear-gradient(90deg, #c6c6c6 1.400px, transparent 1.400px),
    linear-gradient(#ededed 1.600px, transparent 1.600px),
    linear-gradient(90deg, #ededed 1px, transparent 1px);
  background-size: 40px 40px, 40px 40px, 8px 8px, 8px 8px;
}
.scene { position: absolute; left: 0; top: 0; width: 1917px; height: 845px; }

/* navigator */
.nav-panel { position: absolute; left: 5px; top: 7px; width: 299px; }
.panel-head { height: 25px; background: #f2f2f2; border: 1px solid #d2d2d2; display: flex; align-items: center; padding-left: 4px; padding-right: 11px; }
.rew { width: 10px; height: 7px; flex: none; }
.panel-title { margin-left: 10px; font: 11px Roboto, sans-serif; letter-spacing: -.05px; color: #67677a; }
.pm { width: 10px; height: 10px; margin-left: auto; flex: none; }
.tree { display: flex; margin-top: 4px; padding-left: 3px; }
.scrollbar { width: 6px; height: 757px; border-radius: 3px; flex: none; background: linear-gradient(#8c8c8c 0, #8c8c8c 76%, #bdbdbd 76%, #bdbdbd 100%); }
.rows { margin-left: -1px; margin-top: -1px; }
.row { display: flex; align-items: center; height: 24px; padding-left: 27px; }
.arr { width: 10px; height: 14px; flex: none; }
.rbody { height: 22px; display: flex; align-items: center; background: #f2f2f2; margin-left: 8px; padding: 0 10px 0 3px; white-space: nowrap; }
.rbody.item { margin-left: 0; }
.cbar { width: 5px; height: 20px; margin-left: 8px; flex: none; }
.eye { width: 16px; height: 12px; margin-right: 9px; flex: none; }
.ci16 { width: 16px; height: 16px; flex: none; }
.ci16.fd { height: 14px; }
.txt { margin-left: 14px; font-size: 10.800px; color: #404048; }
.t-gear { margin-left: 10px; }
.radio { width: 14px; height: 14px; flex: none; }
.r2 { margin-left: 14px; }
.row.root { padding-left: 8px; }
.tri { width: 12px; height: 12px; flex: none; }
.rbar { width: 3px; height: 17px; margin-left: 9px; flex: none; }
.pink { background: #e690e0; }
.rootb { margin-left: 0; padding: 0 6px 0 3px; }
.rootb .eye { margin-right: 6px; }
.selected { width: 166px; height: 17px; background: #8d8d8d; display: flex; align-items: center; padding-left: 3px; margin-right: 4px; }
.sel-name { margin-left: 14px; color: #fff; font-weight: bold; font-size: 11.500px; }

.c-yoke { background: #5b8def; } .c-a { background: #c08af0; } .c-b { background: #e48fc4; } .c-c { background: #f9b56b; }
.c-d { background: #d7e04f; } .c-e { background: #ee7a50; } .c-f { background: #4dd5f5; } .c-g { background: #ee4fa6; }
.c-h { background: #ff95d6; } .c-i { background: #e8a090; } .c-j { background: #e8cc60; } .c-k { background: #5e9ce8; }
.c-l { background: #7ee060; } .c-m { background: #ea9c50; } .c-n { background: #4858d8; } .c-o { background: #e85850; }
.c-p { background: #f08098; } .c-q { background: #ffb0a8; } .c-r { background: #ffff60; } .c-s { background: #70d0ff; }
.c-t { background: #60e860; } .c-u { background: #7040e0; } .c-v { background: #e090e0; } .c-w { background: #ffd070; } .c-x { background: #c0f060; }

.comments { position: absolute; left: 5px; top: 816px; width: 299px; height: 25px; background: #f2f2f2; border: 1px solid #d2d2d2; border-top-color: #e4e4e4; display: flex; align-items: center; padding-left: 13px; padding-right: 11px; }

.viewcube { position: absolute; left: 1807px; top: 28px; width: 100px; height: 90px; }
.vc-t { font: 9px "Liberation Sans", sans-serif; fill: #777; }
.vc-a { font: 11px "Liberation Sans", sans-serif; }
.vc-a.z { fill: #5055ea; } .vc-a.y { fill: #8cee8c; } .vc-a.x { fill: #f48a8a; }

.navbar { position: absolute; left: 842px; top: 815px; width: 237px; height: 24px; background: #f0f0f0; display: flex; align-items: center; padding-left: 4px; }
.nb { width: 18px; height: 18px; margin-left: 6px; flex: none; }
.nb:first-child { margin-left: 0; }
.navbar .caret { margin-left: 3px; }

/* timeline */
.timeline { position: relative; height: 47px; flex: none; background: #f2f2f2; border-top: 1px solid #dcdcdc; display: flex; }
.controls { width: 144px; flex: none; display: flex; align-items: center; gap: 12px; padding: 11px 0 0 11px; }
.pc { width: 12px; height: 14px; flex: none; }
.pc.big { height: 18px; width: 14px; }
.track { position: relative; width: 1728px; padding-top: 7px; flex: none; }
.segs { display: flex; }
.sbar { height: 6px; margin-right: 4px; }
.cells { display: flex; height: 21px; align-items: center; }
.tl { width: 18px; height: 18px; margin: 0 3px; flex: none; }
.tl.hl { width: 24px; height: 24px; margin: -3px 0 0; padding: 3px; background: #e6e61e; }
.s-pink { background: #e492e4; } .s-salmon { background: #ffa8a8; } .s-blue { background: #5b8def; } .s-violet { background: #7052f2; }
.s-rosa { background: #e68fbe; } .s-rose { background: #f48a98; } .s-coral { background: #ea7250; } .s-red { background: #e85850; }
.s-orange { background: #ffb56b; } .s-peach { background: #e8a090; }
.ruler { height: 7px; width: 1714px; background:
  linear-gradient(#ccc, #ccc) 0 100% / 100% 2px no-repeat,
  repeating-linear-gradient(90deg, transparent 0, transparent 11px, #bbb 11px, #bbb 12px, transparent 12px, transparent 24px); }
.marker { position: absolute; left: 1720px; top: 9px; width: 12px; height: 34px; }
.scroll-thumb { position: absolute; left: 1862px; top: 0; width: 53px; height: 7px; background: #cbcbcb; border-radius: 0 0 4px 4px; }
.tl-gear { width: 16px; height: 16px; margin: 19px 0 0 18px; flex: none; }
```
